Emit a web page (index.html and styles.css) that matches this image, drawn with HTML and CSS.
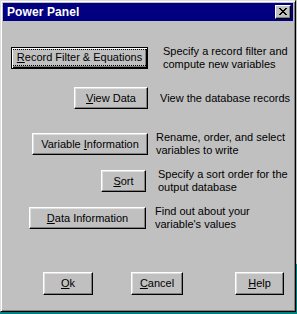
FILE: index.html
```html
<!DOCTYPE html>
<html>
<head>
<meta charset="utf-8">
<link rel="stylesheet" href="styles.css">
</head>
<body>
<div class="desk">
  <div class="behind"></div>
  <div class="window">
    <div class="titlebar">
      <span class="title">Power Panel</span>
      <span class="close"><svg width="8" height="7" viewBox="0 0 8 7" shape-rendering="crispEdges"><path d="M0 0h2v1h-2zM6 0h2v1h-2zM1 1h2v1h-2zM5 1h2v1h-2zM2 2h4v1h-4zM3 3h2v1h-2zM2 4h4v1h-4zM1 5h2v1h-2zM5 5h2v1h-2zM0 6h2v1h-2zM6 6h2v1h-2z" fill="#000"/></svg></span>
    </div>
    <div class="content">
      <div class="row r1">
        <div class="btncol"><span class="btn default"><span class="focus"><u>R</u>ecord Filter &amp; Equations</span></span></div>
        <div class="desc">Specify a record filter and<br>compute new variables</div>
      </div>
      <div class="row r2">
        <div class="btncol"><span class="btn"><span class="lbl"><u>V</u>iew Data</span></span></div>
        <div class="desc">View the database records</div>
      </div>
      <div class="row r3">
        <div class="btncol"><span class="btn"><span class="lbl">Variable <u>I</u>nformation</span></span></div>
        <div class="desc">Rename, order, and select<br>variables to write</div>
      </div>
      <div class="row r4">
        <div class="btncol"><span class="btn"><span class="lbl"><u>S</u>ort</span></span></div>
        <div class="desc">Specify a sort order for the<br>output database</div>
      </div>
      <div class="row r5">
        <div class="btncol"><span class="btn"><span class="lbl"><u>D</u>ata Information</span></span></div>
        <div class="desc">Find out about your<br>variable's values</div>
      </div>
      <div class="footer">
        <span class="btn ok"><span class="lbl"><u>O</u>k</span></span>
        <span class="btn cancel"><span class="lbl"><u>C</u>ancel</span></span>
        <span class="btn help"><span class="lbl"><u>H</u>elp</span></span>
      </div>
    </div>
  </div>
</div>
</body>
</html>
```
FILE: styles.css
```css
html, body {
  margin: 0;
  padding: 0;
}
body {
  width: 297px;
  height: 314px;
  overflow: hidden;
  background: #008080;
  font-family: "Liberation Sans", Arial, sans-serif;
  font-size: 11px;
  color: #000;
}
.desk {
  position: relative;
  width: 297px;
  height: 314px;
}
.behind {
  position: absolute;
  left: 0;
  top: 0;
  width: 297px;
  height: 264px;
  background: #c0c0c0;
}
.window {
  position: absolute;
  left: 0;
  top: 0;
  width: 296px;
  height: 312px;
  box-sizing: border-box;
  background: #c0c0c0;
  border: 1px solid;
  border-color: #dfdfdf #000 #000 #dfdfdf;
  box-shadow: inset 1px 1px #fff, inset -1px -1px #808080;
  padding: 2px;
}
.titlebar {
  height: 18px;
  background: #000080;
  display: flex;
  align-items: center;
  justify-content: space-between;
  padding: 0 2px 0 4px;
}
.title {
  color: #fff;
  font-weight: bold;
  font-size: 12px;
  letter-spacing: 0.1px;
}
.close {
  width: 16px;
  height: 14px;
  box-sizing: border-box;
  background: #c0c0c0;
  border: 1px solid;
  border-color: #fff #000 #000 #fff;
  box-shadow: inset -1px -1px #808080;
  display: flex;
  align-items: center;
  justify-content: center;
  padding: 0 1px 1px 0;
}
.close svg {
  display: block;
}
.content {
  display: flex;
  flex-direction: column;
}
.row {
  display: flex;
  align-items: center;
  height: 26px;
}
.btncol {
  width: 145px;
  display: flex;
  justify-content: flex-end;
  flex: none;
}
.btn {
  display: flex;
  align-items: center;
  justify-content: center;
  height: 22px;
  box-sizing: border-box;
  background: #c0c0c0;
  border: 1px solid;
  border-color: #fff #000 #000 #fff;
  box-shadow: inset -1px -1px #808080, inset 1px 1px #dfdfdf;
  white-space: nowrap;
  padding-bottom: 1px;
}
.lbl {
  display: block;
  line-height: 12px;
}
.btn.default {
  border: 1px solid #000;
  box-shadow: inset 1px 1px #fff, inset -1px -1px #000, inset -2px -2px #808080;
  width: 137px;
}
.focus {
  outline: 1px dotted #000;
  outline-offset: 0;
  padding: 1px 5px 2px 5px;
  display: block;
  line-height: 12px;
}
.desc {
  line-height: 13px;
  white-space: nowrap;
}
.r1 { margin-top: 24px; }
.r2 { margin-top: 14px; }
.r3 { margin-top: 20px; }
.r4 { margin-top: 11px; }
.r5 { margin-top: 11px; }
.r1 .desc { margin-left: 15px; }
.r2 .btn { width: 74px; }
.r2 .desc { margin-left: 12px; }
.r3 .btn { width: 116px; }
.r3 .desc { margin-left: 8px; }
.r4 .btncol { width: 143px; }
.r4 .btn { width: 45px; }
.r4 .desc { margin-left: 12px; }
.r5 .btncol { width: 143px; }
.r5 .btn { width: 117px; }
.r5 .desc { margin-left: 9px; }
.footer {
  display: flex;
  margin-top: 41px;
  padding-left: 40px;
}
.footer .btn {
  height: 23px;
}
.ok { width: 50px; }
.cancel { width: 52px; margin-left: 38px; }
.help { width: 49px; margin-left: 52px; }
```
